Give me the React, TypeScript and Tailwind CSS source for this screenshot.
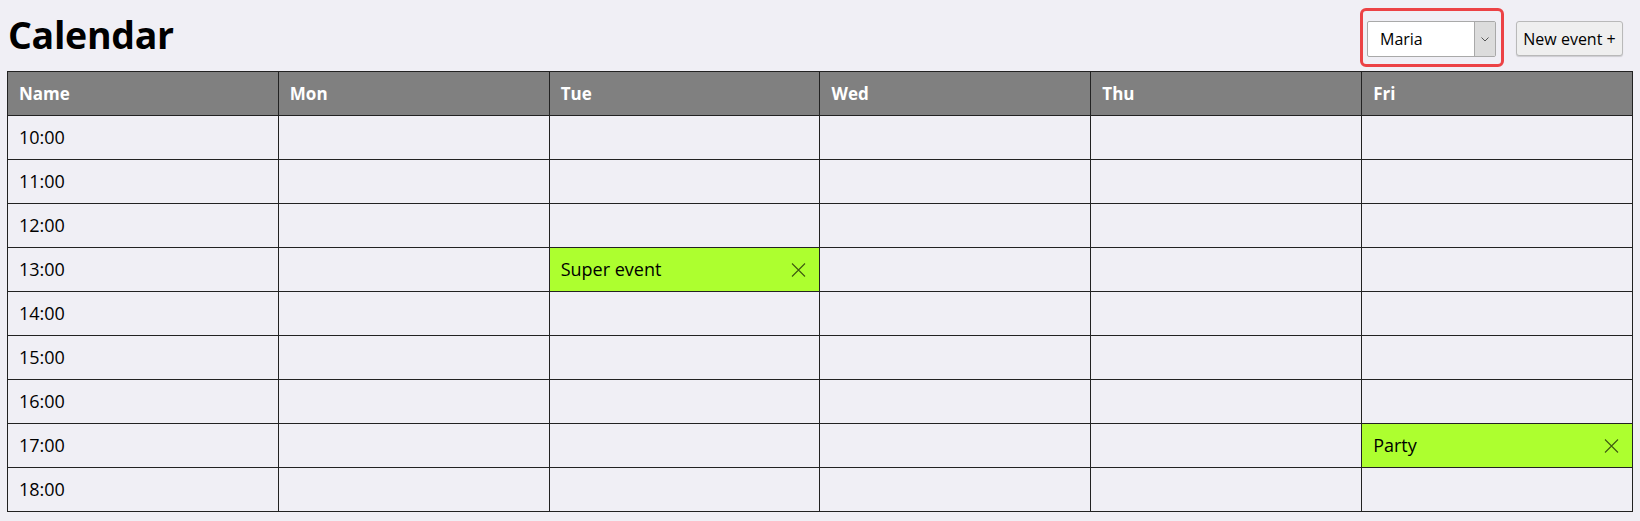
import { useState } from 'react';

const days = ['Mon', 'Tue', 'Wed', 'Thu', 'Fri'];
const hours = ['10:00', '11:00', '12:00', '13:00', '14:00', '15:00', '16:00', '17:00', '18:00'];

type CalEvent = { day: string; hour: string; title: string };

const initialEvents: CalEvent[] = [
  { day: 'Tue', hour: '13:00', title: 'Super event' },
  { day: 'Fri', hour: '17:00', title: 'Party' },
];

const CloseIcon = () => (
  <svg width="15" height="14" viewBox="0 0 15 14" className="shrink-0">
    <path d="M1 0.5 L14 13.5 M14 0.5 L1 13.5" stroke="#3f5a10" strokeWidth="1.1" fill="none" />
  </svg>
);

export default function App() {
  const [events, setEvents] = useState<CalEvent[]>(initialEvents);
  const [user, setUser] = useState('Maria');

  const findEvent = (day: string, hour: string) =>
    events.find((e) => e.day === day && e.hour === hour);

  return (
    <div
      className="min-h-screen bg-[#f0eff5] px-[7px] text-black"
      style={{ fontFamily: '"Open Sans", "Noto Sans", sans-serif' }}
    >
      <div className="flex h-[71px] items-start justify-between">
        <h1 className="mt-[12px] ml-px text-[37.5px] font-bold leading-[46px] tracking-[-0.3px]">Calendar</h1>

        <div className="mr-[10px] mt-[8px] flex items-start gap-3">
          <div className="rounded-md border-[3px] border-[#ec4245] pt-[10px] pb-[7px] pl-1 pr-[5px]">
            <div className="relative flex h-9 w-[129px] items-center rounded-[2px] border border-[#a9a9a9] bg-white">
              <span className="pl-3 text-[16px]">{user}</span>
              <div className="absolute right-0 top-0 flex h-full w-[21px] items-center justify-center border-l border-[#a9a9a9] bg-[#dcdcdc]">
                <svg width="8" height="5" viewBox="0 0 8 5">
                  <path d="M0.5 0.5 L4 4 L7.5 0.5" stroke="#555" fill="none" />
                </svg>
              </div>
              <select
                value={user}
                onChange={(e) => setUser(e.target.value)}
                className="absolute inset-0 opacity-0"
              >
                <option>Maria</option>
                <option>Bob</option>
                <option>Alex</option>
              </select>
            </div>
          </div>

          <button className="mt-[13px] h-[35px] w-[107px] rounded-[3px] border border-[#b9b9b9] bg-[#efefef] text-[16px] shadow-[0_1px_1px_rgba(0,0,0,0.15)]">
            New event +
          </button>
        </div>
      </div>

      <table className="w-[1626px] table-fixed border-collapse text-[18px]">
        <thead>
          <tr className="h-[44px] bg-[#808080] text-[17px] text-white">
            <th className="border border-[#222] pl-[11px] text-left font-bold">Name</th>
            {days.map((d) => (
              <th key={d} className="border border-[#222] pl-[11px] text-left font-bold">
                {d}
              </th>
            ))}
          </tr>
        </thead>
        <tbody>
          {hours.map((h) => (
            <tr key={h} className="h-[44px]">
              <td className="border border-[#222] pl-[11px]">{h}</td>
              {days.map((d) => {
                const ev = findEvent(d, h);
                return (
                  <td key={d} className={`border border-[#222] ${ev ? 'bg-[#adff2f]' : ''}`}>
                    {ev && (
                      <div className="flex items-center justify-between pl-[11px] pr-[13px]">
                        <span>{ev.title}</span>
                        <button
                          onClick={() => setEvents(events.filter((x) => x !== ev))}
                          className="flex items-center"
                        >
                          <CloseIcon />
                        </button>
                      </div>
                    )}
                  </td>
                );
              })}
            </tr>
          ))}
        </tbody>
      </table>
    </div>
  );
}
